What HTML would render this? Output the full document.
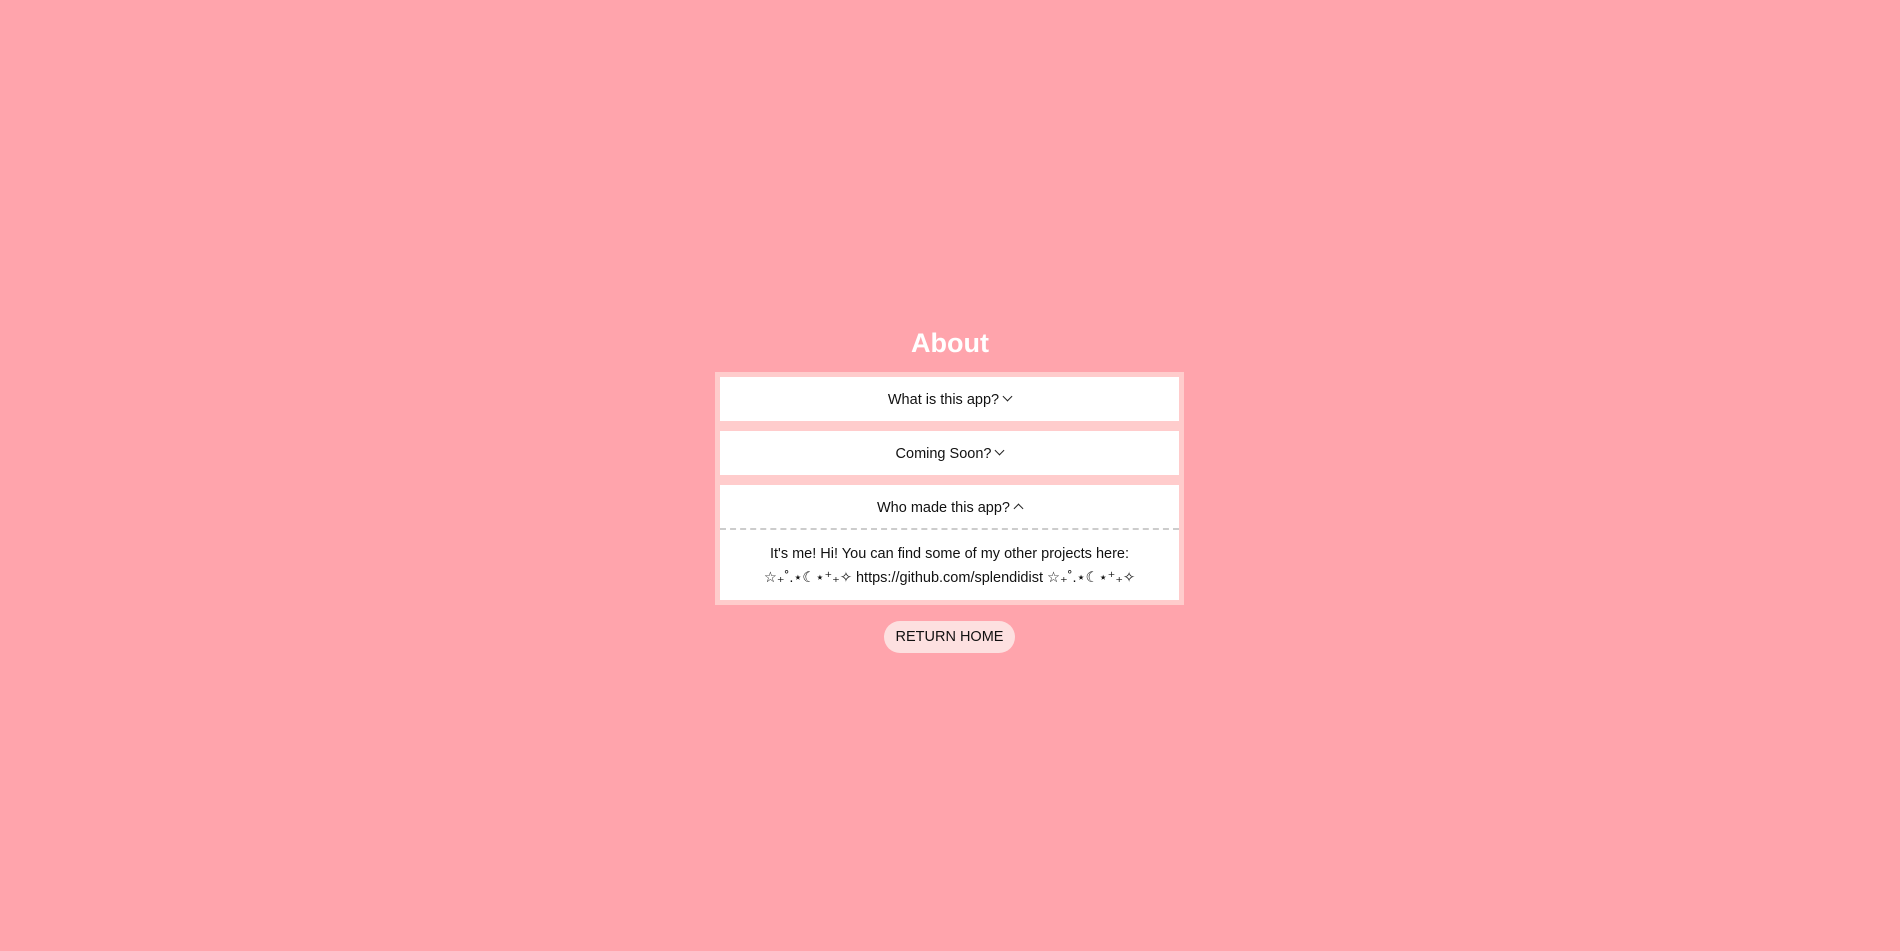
<!DOCTYPE html>
<html><head><style>
body{margin:0;width:1900px;height:951px;background:#ffa4ac;font-family:"Liberation Sans","DejaVu Sans",sans-serif;color:#111;}
h1{position:absolute;top:325px;left:0;width:1900px;text-align:center;margin:0;color:#fff;font-size:27px;font-weight:bold;line-height:36px;}
.box{position:absolute;left:715px;top:372px;width:459px;height:223px;border:5px solid #ffcccc;background:#ffcccc;}
.p{position:absolute;left:0;width:459px;background:#fff;text-align:center;font-size:14.5px;}
.h{height:44px;line-height:46px;}
.ch{display:inline-block;width:6px;height:6px;border-right:1.3px solid #222;border-bottom:1.3px solid #222;transform:rotate(45deg);margin-left:5px;vertical-align:4px;}
.up{transform:rotate(225deg);vertical-align:0px;}
.btn{position:absolute;left:884px;top:621px;width:131px;height:32px;border-radius:16px;background:#fde0e0;text-align:center;line-height:33px;font-size:14.5px;}
</style></head><body>
<h1>About</h1>
<div class="box">
<div class="p h" style="top:0">What is this app?<span class="ch"></span></div>
<div class="p h" style="top:54px">Coming Soon?<span class="ch"></span></div>
<div class="p" style="top:108px;height:115px">
<div class="h" style="border-bottom:2px dashed #ccc;height:43px;line-height:46px">Who made this app?<span class="ch up"></span></div>
<div style="padding-top:12px;line-height:24px">It's me! Hi! You can find some of my other projects here:<br>☆₊˚.⋆☾⋆⁺₊✧ https://github.com/splendidist ☆₊˚.⋆☾⋆⁺₊✧</div>
</div>
</div>
<div class="btn">RETURN HOME</div>
</body></html>
